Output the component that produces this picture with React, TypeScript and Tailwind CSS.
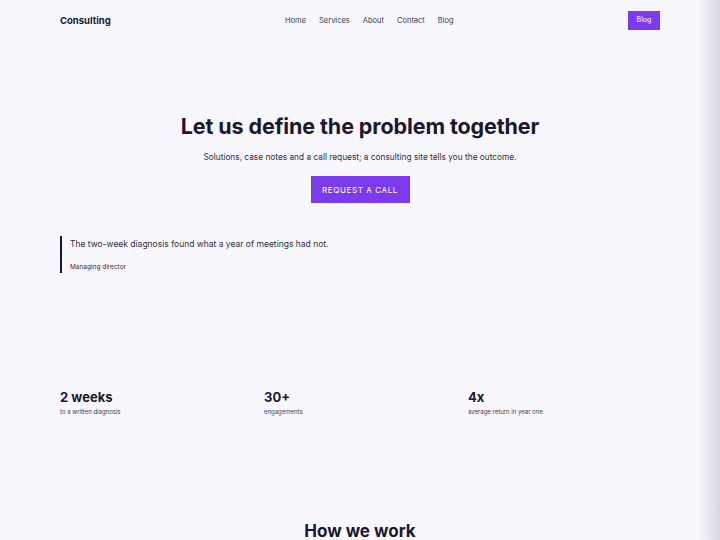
import React from "react";

export default function App() {
  return (
    <div className="relative min-h-[540px] w-full overflow-hidden bg-[#f9f7fe] text-[#1a1830]" style={{ fontFamily: "Inter, 'Noto Sans', sans-serif" }}>
      <div className="pointer-events-none absolute right-0 top-0 h-full w-[22px] bg-gradient-to-r from-transparent to-[#d9d8e0]" />
      <div className="mx-auto w-[600px]">
        <header className="flex h-[41px] items-center justify-between">
          <div className="pt-[1px] text-[9.5px] font-bold">Consulting</div>
          <nav className="flex gap-[13px] text-[7.5px] text-[#3b3950]">
            <span>Home</span>
            <span>Services</span>
            <span>About</span>
            <span>Contact</span>
            <span>Blog</span>
          </nav>
          <button className="h-[19px] w-[32px] bg-[#7c3aed] text-[7px] text-white">Blog</button>
        </header>

        <section className="flex flex-col items-center pt-[72px]">
          <h1 className="text-[21.5px] font-bold leading-[26px] tracking-[-0.1px]">Let us define the problem together</h1>
          <p className="mt-[12px] text-[8.3px] text-[#2f2d40]">Solutions, case notes and a call request; a consulting site tells you the outcome.</p>
          <button className="mt-[13px] h-[27px] w-[99px] bg-[#7c3aed] text-[8px] tracking-[0.6px] text-white">REQUEST A CALL</button>
        </section>

        <blockquote className="mt-[33px] border-l-2 border-[#1a1830] pl-[8px]">
          <p className="pt-[2px] text-[8.5px] leading-[13px] text-[#2f2d40]">The two-week diagnosis found what a year of meetings had not.</p>
          <p className="mt-[11px] pb-[1px] text-[6.5px] leading-[10px] text-[#2f2d40]">Managing director</p>
        </blockquote>

        <div className="mt-[116px] grid grid-cols-3 gap-3">
          {[
            ["2 weeks", "to a written diagnosis"],
            ["30+", "engagements"],
            ["4x", "average return in year one"],
          ].map(([v, l]) => (
            <div key={v}>
              <div className="text-[13px] font-bold leading-[17px]">{v}</div>
              <div className="mt-[1px] text-[6px] leading-[9px] text-[#3b3950]">{l}</div>
            </div>
          ))}
        </div>

        <h2 className="mt-[104px] text-center text-[17px] font-bold leading-[22px]">How we work</h2>
      </div>
    </div>
  );
}
